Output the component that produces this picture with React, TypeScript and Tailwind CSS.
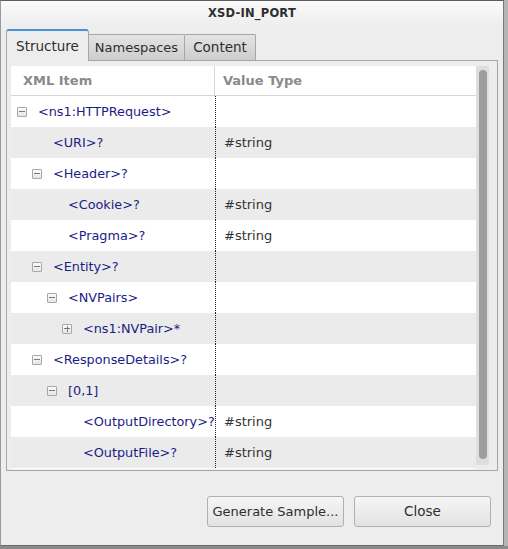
import React from "react";

type Row = { label: string; level: number; exp: "minus" | "plus" | null; value?: string };

const rows: Row[] = [
  { label: "<ns1:HTTPRequest>", level: 0, exp: "minus" },
  { label: "<URI>?", level: 1, exp: null, value: "#string" },
  { label: "<Header>?", level: 1, exp: "minus" },
  { label: "<Cookie>?", level: 2, exp: null, value: "#string" },
  { label: "<Pragma>?", level: 2, exp: null, value: "#string" },
  { label: "<Entity>?", level: 1, exp: "minus" },
  { label: "<NVPairs>", level: 2, exp: "minus" },
  { label: "<ns1:NVPair>*", level: 3, exp: "plus" },
  { label: "<ResponseDetails>?", level: 1, exp: "minus" },
  { label: "[0,1]", level: 2, exp: "minus" },
  { label: "<OutputDirectory>?", level: 3, exp: null, value: "#string" },
  { label: "<OutputFile>?", level: 3, exp: null, value: "#string" },
];

const indent = ["pl-[6px]", "pl-[21px]", "pl-[36px]", "pl-[51px]"];

function Expander({ kind }: { kind: "minus" | "plus" | null }) {
  if (!kind) return <div className="w-[10px] h-[10px] shrink-0" />;
  return (
    <div className="w-[10px] h-[10px] shrink-0 border border-[#a8a8a8] rounded-[1px] bg-gradient-to-b from-[#fbfbfb] to-[#e6e6e6] flex items-center justify-center relative">
      <div className="w-[6px] h-px bg-[#7a7a7a]" />
      {kind === "plus" && <div className="absolute w-px h-[6px] bg-[#7a7a7a]" />}
    </div>
  );
}

export default function App() {
  return (
    <div className="w-[508px] h-[549px] bg-[#8c8c8c] flex flex-col overflow-hidden font-['DejaVu_Sans',sans-serif]">
      <div className="flex">
        <div className="w-[504px] h-[546px] bg-[#ededed] border-t border-l border-r border-b border-t-[#5c5c5c] border-l-[#9a9a9a] border-r-[#7a7a7a] border-b-[#6a6a6a] flex flex-col">
          {/* title */}
          <div className="h-[26px] flex items-center justify-center bg-gradient-to-b from-[#fafafa] to-[#ededed]">
            <span className="text-[11.5px] font-bold text-[#2e2e2e] tracking-[0.2px]">XSD-IN_PORT</span>
          </div>
          {/* tabs */}
          <div className="mt-[2px] pl-[5px] flex items-end h-[31px]">
            <div className="relative z-10 -mb-px w-[83px] h-[32px] flex items-center justify-center bg-[#ededed] border border-b-0 border-[#a6a6a6] border-t-2 border-t-[#4a90d9] rounded-t-[3px]">
              <span className="text-[13.5px] text-[#2e2e2e]">Structure</span>
            </div>
            <div className="w-[96px] h-[26px] flex items-center justify-center bg-gradient-to-b from-[#e4e4e4] to-[#cdcdcd] border border-b-0 border-l-0 border-[#a6a6a6] rounded-tr-[2px]">
              <span className="text-[13px] text-[#2e2e2e]">Namespaces</span>
            </div>
            <div className="w-[71px] h-[26px] flex items-center justify-center bg-gradient-to-b from-[#e4e4e4] to-[#cdcdcd] border border-b-0 border-l-0 border-[#a6a6a6] rounded-tr-[2px]">
              <span className="text-[13.5px] text-[#2e2e2e]">Content</span>
            </div>
          </div>
          {/* panel */}
          <div className="ml-[5px] w-[492px] h-[411px] border border-[#a6a6a6] bg-[#ededed] pt-[5px] pl-[4px] pr-[8px] pb-[1px] flex">
            <div className="flex-1 flex flex-col bg-white">
              <div className="h-[30px] flex border-b border-[#d6d6d6] shrink-0">
                <div className="w-[204px] border-r border-[#d6d6d6] flex items-center pl-[12px]">
                  <span className="text-[13px] font-bold text-[#8a8a8a]">XML Item</span>
                </div>
                <div className="flex-1 flex items-center pl-[8px]">
                  <span className="text-[13px] font-bold text-[#8a8a8a]">Value Type</span>
                </div>
              </div>
              <div className="flex flex-col relative">
                {rows.map((r, i) => (
                  <div key={i} className={`h-[31px] flex ${i % 2 === 1 ? "bg-[#ebebeb]" : "bg-white"}`}>
                    <div className={`w-[204px] shrink-0 flex items-center overflow-hidden ${indent[r.level]}`}>
                      <Expander kind={r.exp} />
                      <span className="ml-[11px] text-[12.8px] text-[#1c1c86] whitespace-nowrap">{r.label}</span>
                    </div>
                    <div className="flex-1 flex items-center pl-[8px] border-l border-dotted border-[#222]">
                      {r.value && <span className="text-[13px] text-[#333333]">{r.value}</span>}
                    </div>
                  </div>
                ))}
              </div>
            </div>
            <div className="w-[13px] h-[399px] bg-[#dedede] flex justify-center pt-[4px] pb-[6px]">
              <div className="w-[8px] h-full rounded-full bg-[#9d9d9d]" />
            </div>
          </div>
          {/* buttons */}
          <div className="mt-[25px] flex justify-end gap-[10px] pr-[12px]">
            <button className="w-[137px] h-[31px] rounded-[3px] border border-[#b0b0b0] bg-gradient-to-b from-[#f6f6f6] to-[#e2e2e2] text-[13px] text-[#2e2e2e] font-['DejaVu_Sans',sans-serif]">
              Generate Sample...
            </button>
            <button className="w-[137px] h-[31px] rounded-[3px] border border-[#b0b0b0] bg-gradient-to-b from-[#f6f6f6] to-[#e2e2e2] text-[13.5px] text-[#2e2e2e] font-['DejaVu_Sans',sans-serif]">
              Close
            </button>
          </div>
        </div>
        <div className="w-[4px] h-[546px] bg-[#b4b4b4]" />
      </div>
      <div className="h-[3px] bg-[#8a8a8a]" />
    </div>
  );
}
